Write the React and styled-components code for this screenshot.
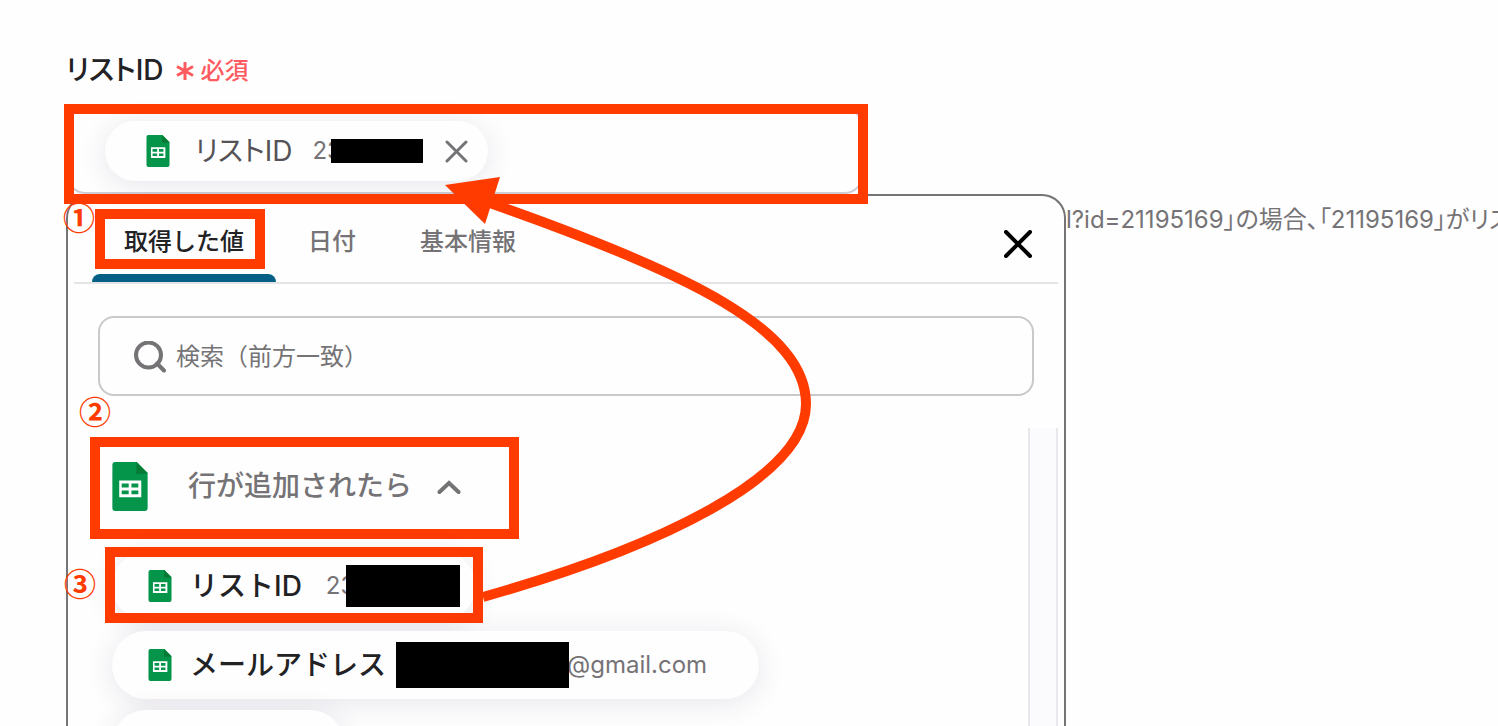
import React from 'react';
import { useState } from 'react';
import styled, { createGlobalStyle, css } from 'styled-components';

const ACCENT = '#ff3b00';
const GRAY = '#757376';
const INK = '#222124';

const GlobalStyle = createGlobalStyle`
  * {
    box-sizing: border-box;
  }

  body {
    margin: 0;
    background: #fefefe;
    color: ${INK};
    font-family: Inter, "Noto Sans CJK JP", sans-serif;
    font-size: 24px;
    line-height: 32px;
  }

  button, input {
    margin: 0;
    padding: 0;
    border: 0;
    background: none;
    color: inherit;
    font: inherit;
  }

  button {
    cursor: pointer;
  }
`;

const Page = styled.main`
  position: relative;
  display: flex;
  flex-direction: column;
  height: 100vh;
  padding: 50px 0 0 66px;
  overflow: hidden;
`;

const FieldHeader = styled.div`
  display: flex;
  align-items: center;
  gap: 12px;
  height: 40px;
  margin-bottom: 18px;
`;

const FieldLabel = styled.label`
  font-size: 28px;
  font-weight: 500;
  font-feature-settings: "palt";
`;

const Required = styled.span`
  display: flex;
  align-items: center;
  gap: 7px;
  padding-top: 2px;
  color: #ff5a5f;
  font-weight: 500;
`;

const Field = styled.div`
  position: relative;
  z-index: 2;
  display: flex;
  align-items: center;
  flex-shrink: 0;
  width: 56%;
  max-width: 798px;
  height: 86px;
  padding: 0 20px 0 37px;
  border: 2px solid #cfcdd4;
  border-radius: 20px;
`;

const FieldInput = styled.input`
  flex: 1;
  min-width: 0;
  outline: none;
`;

const pill = css`
  display: flex;
  align-items: center;
  flex-shrink: 0;
  border-radius: 34px;
  background: #fefefe;
  box-shadow: 0 4px 28px rgba(60, 45, 90, 0.12);
`;

const Token = styled.span`
  ${pill}
  height: 60px;
  padding: 0 20px 0 41px;
`;

const TokenName = styled.span`
  margin-left: 25px;
  color: #555357;
  font-size: 28px;
  font-feature-settings: "palt";
`;

const TokenRemove = styled.button`
  display: flex;
  margin-left: 22px;
  color: ${GRAY};
`;

const Value = styled.span`
  margin-left: ${(p) => (p.$gap ? `${p.$gap}px` : 0)};
  color: ${GRAY};
  font-weight: 400;
`;

const Mask = styled.span`
  flex-shrink: 0;
  width: ${(p) => p.$width}px;
  height: ${(p) => p.$height}px;
  margin-left: ${(p) => p.$shift || 0}px;
  background: #000;
  z-index: 1;
`;

const Below = styled.div`
  display: flex;
  flex: 1;
  min-height: 0;
`;

const Picker = styled.section`
  position: relative;
  display: flex;
  flex-direction: column;
  width: 70%;
  max-width: 1000px;
  padding: 0 6px;
  border: 2px solid ${GRAY};
  border-bottom: 0;
  border-radius: 24px 24px 0 0;
`;

const Help = styled.p`
  flex: 1;
  min-width: 0;
  margin: 10px 0 0;
  overflow: hidden;
  color: ${GRAY};
  white-space: nowrap;
  font-feature-settings: "palt";
`;

const TabBar = styled.div`
  display: flex;
  align-items: flex-end;
  flex-shrink: 0;
  height: 88px;
  padding-left: 18px;
  border-bottom: 2px solid #e4e3e5;
`;

const Tab = styled.button`
  position: relative;
  height: 66px;
  padding: 0 32px 14px;
  color: ${(p) => (p.$active ? INK : GRAY)};
  font-weight: 500;

  &::after {
    content: '';
    position: absolute;
    left: 0;
    right: 0;
    bottom: 0;
    height: 8px;
    border-radius: 8px 8px 0 0;
    background: ${(p) => (p.$active ? '#055f87' : 'transparent')};
  }
`;

const CloseButton = styled.button`
  display: flex;
  align-self: center;
  margin: 9px 26px 0 auto;
  color: #000;
`;

const Search = styled.label`
  display: flex;
  align-items: center;
  flex-shrink: 0;
  gap: 10px;
  height: 80px;
  margin: 32px 24px;
  padding: 2px 34px 0;
  border: 2px solid #c9c8cb;
  border-radius: 16px;
  color: ${GRAY};
`;

const SearchInput = styled.input`
  flex: 1;
  min-width: 0;
  outline: none;

  &::placeholder {
    color: ${GRAY};
    opacity: 1;
  }
`;

const Results = styled.div`
  display: flex;
  flex: 1;
  min-height: 0;
`;

const ResultList = styled.div`
  flex: 1;
  min-width: 0;
  padding: 18px 38px 0;
  overflow: hidden;
`;

const Track = styled.div`
  width: 30px;
  border: 2px solid #e9e7ec;
  border-width: 0 2px;
  background: #fbfafd;
`;

const Group = styled.button`
  position: relative;
  display: flex;
  align-items: center;
  height: 80px;
  color: ${GRAY};
  font-size: 28px;
  font-weight: 500;
`;

const GroupName = styled.span`
  margin: 0 25px 0 40px;
`;

const Items = styled.ul`
  display: flex;
  flex-direction: column;
  align-items: flex-start;
  gap: 11px;
  margin: 0;
  padding: 26px 0 0;
  list-style: none;
`;

const Item = styled.li`
  ${pill}
  position: relative;
  min-width: 232px;
  height: 68px;
  padding: 0 ${(p) => p.$end}px 0 36px;
`;

const ItemName = styled.span`
  margin-left: 18px;
  font-size: 28px;
  font-weight: 500;
`;

// annotations that lie over the screen
const Callout = styled.span`
  position: absolute;
  top: ${(p) => p.$inset[0]}px;
  right: ${(p) => p.$inset[1]}px;
  bottom: ${(p) => p.$inset[2]}px;
  left: ${(p) => p.$inset[3]}px;
  border: 10px solid ${ACCENT};
  pointer-events: none;
`;

const Step = styled.span`
  position: absolute;
  top: ${(p) => p.$top}px;
  left: ${(p) => p.$left}px;
  z-index: 3;
  color: ${ACCENT};
  font-family: "Noto Sans CJK JP", sans-serif;
  font-size: 32px;
  font-weight: 700;
  line-height: 32px;
`;

const ArrowLayer = styled.svg`
  position: absolute;
  top: 0;
  left: 0;
  z-index: 4;
  pointer-events: none;
`;

const SheetIcon = ({ width = 24 }) => (
  <svg width={width} height={Math.round((width * 50) / 37)} viewBox="0 0 36 50" aria-hidden="true">
    <path d="M3 0H25L36 11V47Q36 50 33 50H3Q0 50 0 47V3Q0 0 3 0Z" fill="#04954b" />
    <path d="M24.500 0L36 12H24.500Z" fill="#047a35" />
    <path
      fillRule="evenodd"
      d="M7 19H29.500V36H7ZM9.500 22V26H16.700V22ZM19.500 22V26H26.500V22ZM9.500 29V33H16.700V29ZM19.500 29V33H26.500V29Z"
      fill="#fff"
    />
  </svg>
);

const Cross = ({ size, stroke }) => (
  <svg width={size} height={size} viewBox={`0 0 ${size} ${size}`} aria-hidden="true">
    <path
      d={`M2 2L${size - 2} ${size - 2}M${size - 2} 2L2 ${size - 2}`}
      stroke="currentColor"
      strokeWidth={stroke}
      strokeLinecap="round"
    />
  </svg>
);

const Arrow = () => (
  <ArrowLayer width="900" height="640" viewBox="0 0 900 640" aria-hidden="true">
    <path
      d="M483 597C660 547 806 477 806 404C806 330 690 273 490 203"
      fill="none"
      stroke={ACCENT}
      strokeWidth="10"
    />
    <path d="M445 185L500 177L485 224Z" fill={ACCENT} />
  </ArrowLayer>
);

const tabs = ['取得した値', '日付', '基本情報'];

function App() {
  const [active, setActive] = useState(0);
  const [open, setOpen] = useState(true);

  return (
    <>
      <GlobalStyle />
      <Page>
        <FieldHeader>
          <FieldLabel htmlFor="list-id">リストID</FieldLabel>
          <Required>
            <svg width="18" height="20" viewBox="0 0 18 20" aria-hidden="true">
              <path d="M9 1V19M1 5.500L17 14.500M17 5.500L1 14.500" stroke="currentColor" strokeWidth="3" />
            </svg>
            必須
          </Required>
        </FieldHeader>

        <Field>
          <Token>
            <SheetIcon />
            <TokenName>リストID</TokenName>
            <Value $gap={20}>23</Value>
            <Mask $width={92} $height={24} $shift={-11} />
            <TokenRemove aria-label="削除">
              <Cross size={23} stroke={3} />
            </TokenRemove>
          </Token>
          <FieldInput id="list-id" />
          <Callout $inset={[-6, -6, -12, -4]} />
        </Field>

        <Below>
          <Picker>
            <Step $top={4} $left={-5}>①</Step>
            <Step $top={198} $left={11}>②</Step>
            <Step $top={370} $left={-4}>③</Step>
            <TabBar role="tablist">
              {tabs.map((name, i) => (
                <Tab key={name} role="tab" aria-selected={i === active} $active={i === active} onClick={() => setActive(i)}>
                  {name}
                  {i === 0 ? <Callout $inset={[-7, 11, 13, 3]} /> : null}
                </Tab>
              ))}
              <CloseButton aria-label="閉じる">
                <Cross size={28} stroke={4} />
              </CloseButton>
            </TabBar>

            <Search>
              <svg width="32" height="32" viewBox="0 0 32 32" fill="none" aria-hidden="true">
                <circle cx="14.500" cy="14" r="12.500" stroke="currentColor" strokeWidth="4" />
                <path d="M23 22.500L30 29.500" stroke="currentColor" strokeWidth="4" strokeLinecap="round" />
              </svg>
              <SearchInput placeholder="検索（前方一致）" aria-label="検索" />
            </Search>

            <Results>
              <ResultList>
                <Group aria-expanded={open} onClick={() => setOpen(!open)}>
                  <SheetIcon width={36} />
                  <GroupName>行が追加されたら</GroupName>
                  <svg width="24" height="16" viewBox="0 0 24 16" fill="none" aria-hidden="true">
                    <path d="M2.500 14L12 5L21.500 14" stroke="currentColor" strokeWidth="4" strokeLinecap="round" />
                  </svg>
                  <Callout $inset={[-9, -58, -13, -22]} />
                </Group>
                {open ? (
                  <Items>
                    <Item $end={16}>
                      <SheetIcon />
                      <ItemName>リストID</ItemName>
                      <Value $gap={24}>23</Value>
                      <Mask $width={114} $height={42} $shift={-9} />
                      <Callout $inset={[-5, -7, -3, -7]} />
                    </Item>
                    <Item $end={52}>
                      <SheetIcon />
                      <ItemName>メールアドレス</ItemName>
                      <Mask $width={173} $height={46} $shift={10} />
                      <Value $gap={-2}>@gmail.com</Value>
                    </Item>
                    <Item $end={36} />
                  </Items>
                ) : null}
              </ResultList>
              <Track />
            </Results>
          </Picker>
          <Help>l?id=21195169」の場合、「21195169」がリス</Help>
        </Below>

        <Arrow />
      </Page>
    </>
  );
}

export default App;
